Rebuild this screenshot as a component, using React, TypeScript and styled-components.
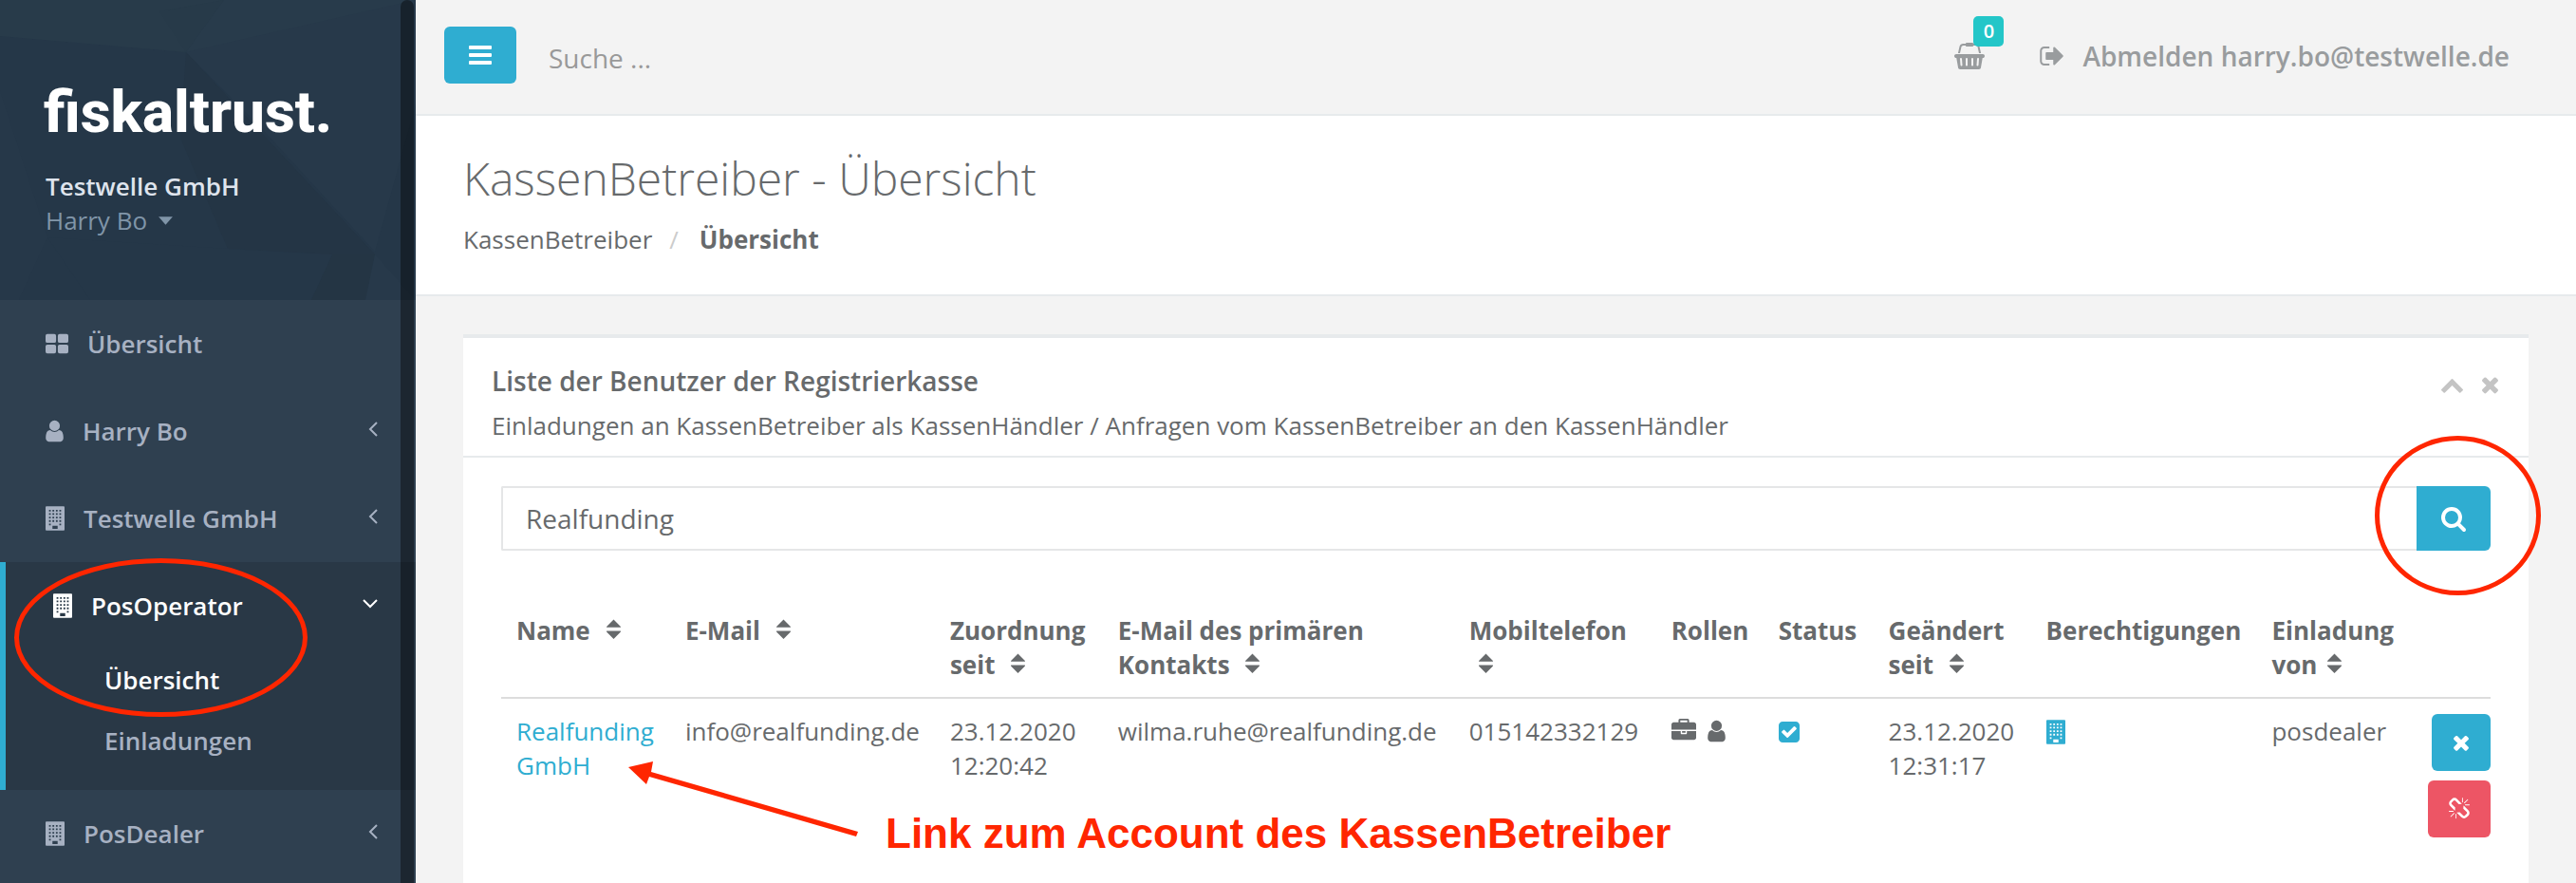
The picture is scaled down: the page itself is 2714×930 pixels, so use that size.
import React from 'react';
import styled, { createGlobalStyle, css } from 'styled-components';

const color = {
  text: '#676a6c',
  muted: '#999c9e',
  primary: '#2fadd1',
  danger: '#ed5565',
  info: '#23c6c8',
  line: '#e7eaec',
  canvas: '#f3f3f3',
  nav: '#2f4050',
  navActive: '#293846',
  navText: '#a7b1c2',
  mark: '#ff2600',
};

const GlobalStyle = createGlobalStyle`
  *, *::before, *::after { box-sizing: border-box; }
  body {
    margin: 0;
    background: ${color.canvas};
    color: ${color.text};
    font-family: "Open Sans", "Noto Sans", sans-serif;
    font-size: 26px;
    line-height: 36px;
    overflow: hidden;
  }
  button, input { font: inherit; color: inherit; }
  a { text-decoration: none; color: inherit; }
  h1, h2, p, ul, ol { margin: 0; padding: 0; }
  ul, ol { list-style: none; }
`;

/* ---------- icons (1792 units per em, baseline at 1536) ---------- */

type Glyph = { x: number; w: number; d: string };

const holes = [384, 640, 896, 1152].map((x) =>
  [256, 512, 768, 1024, 1280]
    .map((y) => (y === 1280 && x > 384 && x < 1152 ? '' : `M${x} ${y}h128v128h-128z`))
    .join('')
).join('');

const glyphs: Record<string, Glyph> = {
  bars: {
    x: 128,
    w: 1536,
    d: 'M192 256h1408q64 0 64 64v128q0 64-64 64h-1408q-64 0-64-64v-128q0-64 64-64zM192 768h1408q64 0 64 64v128q0 64-64 64h-1408q-64 0-64-64v-128q0-64 64-64zM192 1280h1408q64 0 64 64v128q0 64-64 64h-1408q-64 0-64-64v-128q0-64 64-64z',
  },
  times: {
    x: 302,
    w: 1188,
    d: 'M1490 1322q0 40-28 68l-136 136q-28 28-68 28t-68-28l-294-294-294 294q-28 28-68 28t-68-28l-136-136q-28-28-28-68t28-68l294-294-294-294q-28-28-28-68t28-68l136-136q28-28 68-28t68 28l294 294 294-294q28-28 68-28t68 28l136 136q28 28 28 68t-28 68l-294 294 294 294q28 28 28 68z',
  },
  search: {
    x: 64,
    w: 1664,
    d: 'M1216 832q0-185-131.5-316.5t-316.5-131.5-316.5 131.5-131.5 316.5 131.5 316.5 316.5 131.5 316.5-131.5 131.5-316.5zm512 832q0 52-38 90t-90 38q-54 0-90-38l-343-342q-179 124-399 124-143 0-273.5-55.5t-225-150-150-225-55.5-273.5 55.5-273.5 150-225 225-150 273.5-55.5 273.5 55.5 225 150 150 225 55.5 273.5q0 220-124 399l343 343q37 37 37 90z',
  },
  user: {
    x: 256,
    w: 1280,
    d: 'M1536 1399q0 109-62.5 187t-150.5 78h-854q-88 0-150.5-78t-62.5-187q0-85 8.5-160.5t31.5-152 58.5-131 94-89 134.5-34.5q131 128 313 128t313-128q76 0 134.5 34.5t94 89 58.5 131 31.5 152 8.5 160.5zm-256-887q0 159-112.5 271.5t-271.5 112.5-271.5-112.5-112.5-271.5 112.5-271.5 271.5-112.5 271.5 112.5 112.5 271.5z',
  },
  chevronUp: {
    x: 90,
    w: 1612,
    d: 'M1683 1331l-166 165q-19 19-45 19t-45-19l-531-531-531 531q-19 19-45 19t-45-19l-166-165q-19-19-19-45.5t19-45.5l742-741q19-19 45-19t45 19l742 741q19 19 19 45.5t-19 45.5z',
  },
  signOut: {
    x: 64,
    w: 1568,
    d: 'M704 1440q0 4 1 20t.5 26.5-3 23.5-10 19.5-20.5 6.5h-320q-119 0-203.5-84.5t-84.5-203.5v-704q0-119 84.5-203.5t203.5-84.5h320q13 0 22.5 9.5t9.5 22.5q0 4 1 20t.5 26.5-3 23.5-10 19.5-20.5 6.5h-320q-66 0-113 47t-47 113v704q0 66 47 113t113 47h312l11.5 1 11.5 3 8 5.5 7 9 2 13.5zm928-544q0 26-19 45l-544 544q-19 19-45 19t-45-19-19-45v-288h-448q-26 0-45-19t-19-45v-384q0-26 19-45t45-19h448v-288q0-26 19-45t45-19 45 19l544 544q19 19 19 45z',
  },
  basket: {
    x: 0,
    w: 2048,
    d: 'M1920 768q53 0 90.5 37.5t37.5 90.5-37.5 90.5-90.5 37.5h-15l-115 662q-8 46-44 76t-82 30h-1280q-46 0-82-30t-44-76l-115-662h-15q-53 0-90.5-37.5t-37.5-90.5 37.5-90.5 90.5-37.5h1792zm-1435 800q26-2 43.5-22.5t15.5-46.5l-32-416q-2-26-22.5-43.5t-46.5-15.5-43.5 22.5-15.5 46.5l32 416q2 25 20.5 42t43.5 17h5zm411-64v-416q0-26-19-45t-45-19-45 19-19 45v416q0 26 19 45t45 19 45-19 19-45zm384 0v-416q0-26-19-45t-45-19-45 19-19 45v416q0 26 19 45t45 19 45-19 19-45zm352 5l32-416q2-26-15.5-46.5t-43.5-22.5-46.5 15.5-22.5 43.5l-32 416q-2 26 15.5 46.5t43.5 22.5h5q25 0 43.5-17t20.5-42zm-1156-1217l-93 412h-132l101-441q19-88 89-143.5t160-55.5h167q0-26 19-45t45-19h384q26 0 45 19t19 45h167q90 0 160 55.5t89 143.5l101 441h-132l-93-412q-11-44-45.5-72t-79.5-28h-167q0 26-19 45t-45 19h-384q-26 0-45-19t-19-45h-167q-45 0-79.5 28t-45.5 72z',
  },
  check: {
    x: 128,
    w: 1536,
    d: 'M813 1299l614-614q19-19 19-45t-19-45l-102-102q-19-19-45-19t-45 19l-467 467-211-211q-19-19-45-19t-45 19l-102 102q-19 19-19 45t19 45l358 358q19 19 45 19t45-19zm851-883v960q0 119-84.5 203.5t-203.5 84.5h-960q-119 0-203.5-84.5t-84.5-203.5v-960q0-119 84.5-203.5t203.5-84.5h960q119 0 203.5 84.5t84.5 203.5z',
  },
  unlink: {
    x: 64,
    w: 1664,
    d: 'M503 1271l-256 256q-10 9-23 9-12 0-23-9-9-10-9-23t9-23l256-256q10-9 23-9t23 9q9 10 9 23t-9 23zm169 41v320q0 14-9 23t-23 9-23-9-9-23v-320q0-14 9-23t23-9 23 9 9 23zm-224-224q0 14-9 23t-23 9h-320q-14 0-23-9t-9-23 9-23 23-9h320q14 0 23 9t9 23zm1264 128q0 120-85 203l-147 146q-83 83-203 83-121 0-204-85l-334-335q-21-21-42-56l239-18 273 274q28 28 68 27.5t68-27.5l147-146q28-28 28-67 0-40-28-68l-274-275 18-239q35 21 56 42l336 336q84 86 84 204zm-617-724l-239 18-273-274q-28-28-68-28-39 0-68 27l-147 146q-28 28-28 67 0 40 28 68l274 274-18 240q-35-21-56-42l-336-336q-84-86-84-204 0-120 85-203l147-146q83-83 203-83 121 0 204 85l334 335q21 21 42 56zm633 84q0 14-9 23t-23 9h-320q-14 0-23-9t-9-23 9-23 23-9h320q14 0 23 9t9 23zm-544-544v320q0 14-9 23t-23 9-23-9-9-23v-320q0-14 9-23t23-9 23 9 9 23zm407 151l-256 256q-11 9-23 9t-23-9q-9-10-9-23t9-23l256-256q10-9 23-9t23 9q9 10 9 23t-9 23z',
  },
  briefcase: {
    x: 0,
    w: 1792,
    d: 'M640 256h512v-128h-512v128zm1152 640v480q0 66-47 113t-113 47h-1472q-66 0-113-47t-47-113v-480h672v160q0 26 19 45t45 19h320q26 0 45-19t19-45v-160h672zm-768 0v128h-256v-128h256zm768-480v384h-1792v-384q0-66 47-113t113-47h352v-160q0-40 28-68t68-28h576q40 0 68 28t28 68v160h352q66 0 113 47t47 113z',
  },
  building: {
    x: 128,
    w: 1408,
    d: `M192 0h1280q64 0 64 64v1664q0 64-64 64h-1280q-64 0-64-64v-1664q0-64 64-64z${holes}M640 1440h384v224h-384z`,
  },
  thLarge: {
    x: 64,
    w: 1664,
    d: 'M192 192h512q128 0 128 128v384q0 128-128 128h-512q-128 0-128-128v-384q0-128 128-128zM1088 192h512q128 0 128 128v384q0 128-128 128h-512q-128 0-128-128v-384q0-128 128-128zM192 960h512q128 0 128 128v384q0 128-128 128h-512q-128 0-128-128v-384q0-128 128-128zM1088 960h512q128 0 128 128v384q0 128-128 128h-512q-128 0-128-128v-384q0-128 128-128z',
  },
  sort: {
    x: 384,
    w: 1024,
    d: 'M384 608v-64L896 32l512 512v64zM384 864v64l512 512 512-512v-64z',
  },
  caret: { x: 384, w: 1024, d: 'M384 640h1024L896 1216z' },
};

const Svg = styled.svg`
  display: inline-block;
  flex: none;
  fill: currentColor;
  fill-rule: evenodd;
  vertical-align: -4px;
`;

const Icon = ({ name, size = 26, className }: { name: string; size?: number; className?: string }) => {
  const g = glyphs[name];
  return (
    <Svg
      className={className}
      viewBox={`${g.x} 0 ${g.w} 1792`}
      width={Math.round((g.w * size) / 1792)}
      height={size}
      aria-hidden="true"
    >
      <path d={g.d} />
    </Svg>
  );
};

/* ---------- shell ---------- */

const Shell = styled.div`
  display: flex;
  min-height: 100vh;
`;

const Sidebar = styled.nav`
  position: relative;
  flex: none;
  width: 438px;
  background: ${color.nav};
  color: ${color.navText};
  font-weight: 600;
`;

const ScrollThumb = styled.div`
  position: absolute;
  top: 0;
  right: 2px;
  bottom: 0;
  width: 14px;
  border-radius: 7px 7px 0 0;
  background: rgba(0, 0, 0, 0.4);
`;

const Profile = styled.div`
  position: relative;
  padding: 78px 46px 66px;
  background: #253748;
`;

const Facets = styled.svg`
  position: absolute;
  inset: 0;
  width: 100%;
  height: 100%;
`;

const ProfileText = styled.div`
  position: relative;
  display: flex;
  flex-direction: column;
  align-items: flex-start;
`;

const Logo = styled.a`
  color: #fff;
  font-family: Roboto, sans-serif;
  font-weight: 800;
  font-size: 62px;
  line-height: 80px;
  margin-bottom: 20px;
`;

const Company = styled.strong`
  padding-left: 2px;
  color: #dfe4ed;
  font-weight: 600;
`;

const AccountButton = styled.button`
  display: flex;
  align-items: center;
  gap: 12px;
  padding: 0 0 0 2px;
  border: 0;
  background: none;
  color: #8095a8;
  font-weight: 400;
`;

const NavGroup = styled.li<{ $active?: boolean }>`
  ${(p) =>
    p.$active &&
    css`
      position: relative;
      padding-bottom: 20px;
      border-left: 6px solid ${color.primary};
      background: ${color.navActive};
    `}
`;

const NavLink = styled.a<{ $active?: boolean }>`
  display: flex;
  align-items: center;
  gap: 20px;
  padding: 28px 40px 28px ${(p) => (p.$active ? 50 : 48)}px;
  color: ${(p) => (p.$active ? '#fff' : 'inherit')};
`;

const Angle = styled.svg`
  margin: 0 0 4px auto;
  fill: none;
  stroke: currentColor;
  stroke-width: 2;
`;

const SubLink = styled.a<{ $active?: boolean }>`
  display: block;
  padding: 14px 40px 14px 104px;
  color: ${(p) => (p.$active ? '#fff' : 'inherit')};
`;

const Main = styled.div`
  flex: 1;
  min-width: 0;
  display: flex;
  flex-direction: column;
`;

const TopBar = styled.header`
  display: flex;
  align-items: flex-start;
  padding: 28px 70px 26px 30px;
  border-bottom: 2px solid ${color.line};
`;

const Button = styled.button<{ $tone?: 'danger'; $width: number }>`
  display: flex;
  align-items: center;
  justify-content: center;
  flex: none;
  width: ${(p) => p.$width}px;
  height: 60px;
  padding: 0;
  border: 0;
  border-radius: 6px;
  background: ${(p) => (p.$tone === 'danger' ? color.danger : color.primary)};
  color: #fff;
`;

const GlobalSearch = styled.input`
  flex: 1;
  min-width: 0;
  height: 66px;
  margin-left: 34px;
  padding: 0;
  border: 0;
  background: none;
  font-size: 28px;
  &::placeholder {
    color: #999;
    opacity: 1;
  }
`;

const TopLinks = styled.div`
  display: flex;
  align-items: center;
  gap: 58px;
  height: 62px;
  color: ${color.muted};
  font-size: 28px;
  font-weight: 600;
`;

const BasketLink = styled.a`
  position: relative;
  display: flex;
`;

const Badge = styled.span`
  position: absolute;
  left: 20px;
  bottom: 24px;
  width: 32px;
  height: 32px;
  border-radius: 5px;
  background: ${color.info};
  color: #fff;
  font-size: 20px;
  line-height: 32px;
  text-align: center;
`;

const LogoutLink = styled.a`
  display: flex;
  align-items: center;
  gap: 20px;
`;

const PageHead = styled.section`
  padding: 40px 50px;
  border-bottom: 2px solid ${color.line};
  background: #fff;
`;

const Title = styled.h1`
  margin-bottom: 20px;
  font-size: 48px;
  line-height: 52px;
  font-weight: 300;
`;

const Crumbs = styled.ol`
  display: flex;
  li + li::before {
    content: '/';
    padding: 0 22px 0 18px;
    color: #ccc;
    font-weight: 400;
  }
  li:last-child {
    font-weight: 700;
  }
`;

const Content = styled.main`
  display: flex;
  flex: 1;
  padding: 40px 50px 0;
`;

const Panel = styled.section`
  flex: 1;
  min-width: 0;
  border-top: 4px solid ${color.line};
  background: #fff;
`;

const PanelHead = styled.div`
  display: flex;
  justify-content: space-between;
  padding: 26px 32px 14px 30px;
  border-bottom: 2px solid ${color.line};
`;

const PanelTitle = styled.h2`
  margin-bottom: 10px;
  font-size: 28px;
  line-height: 38px;
  font-weight: 600;
`;

const PanelTools = styled.div`
  display: flex;
  align-items: flex-start;
  gap: 20px;
  padding-top: 10px;
  color: #c4c4c4;
`;

const ToolButton = styled.button`
  display: flex;
  padding: 0;
  border: 0;
  background: none;
`;

const PanelBody = styled.div`
  padding: 30px 40px;
`;

const SearchRow = styled.form`
  position: relative;
  display: flex;
  margin-bottom: 50px;
`;

const SearchField = styled.input`
  flex: 1;
  min-width: 0;
  height: 68px;
  padding: 0 24px;
  border: 2px solid #e5e6e7;
  border-right: 0;
  border-radius: 2px 0 0 2px;
  background: #fff;
  font-size: 28px;
  outline: 0;
`;

const SearchButton = styled(Button)`
  height: 68px;
  border-radius: 0 6px 6px 0;
`;

const Table = styled.table`
  width: 100%;
  table-layout: fixed;
  border-collapse: collapse;
`;

const Col = styled.col<{ $share?: number }>`
  width: ${(p) => (p.$share ? `${p.$share}%` : 'auto')};
`;

const Th = styled.th`
  padding: 16px 0 16px 16px;
  border-bottom: 2px solid #ddd;
  font-weight: 700;
  text-align: left;
  vertical-align: top;
`;

const Td = styled.td`
  position: relative;
  padding: 16px 0 16px 16px;
  vertical-align: top;
`;

const SortIcon = styled(Icon)<{ $tight?: boolean }>`
  margin-left: ${(p) => (p.$tight ? 4 : 10)}px;
`;

const Roles = styled.span`
  display: inline-flex;
  align-items: center;
  gap: 12px;
  height: 36px;
`;

const StateIcon = styled.span`
  color: ${color.primary};
`;

const CompanyLink = styled.a`
  color: ${color.primary};
`;

const Actions = styled.div`
  display: flex;
  flex-direction: column;
  align-items: flex-end;
  gap: 10px;
`;

/* ---------- hand-drawn marks over the page ---------- */

const Ring = styled.span<{ $left?: number; $right?: number; $top: number; $w: number; $h: number }>`
  position: absolute;
  z-index: 2;
  ${(p) => (p.$left !== undefined ? `left: ${p.$left}px;` : '')}
  ${(p) => (p.$right !== undefined ? `right: ${p.$right}px;` : '')}
  top: ${(p) => p.$top}px;
  width: ${(p) => p.$w}px;
  height: ${(p) => p.$h}px;
  border: 5px solid ${color.mark};
  border-radius: 50%;
  pointer-events: none;
`;

const Callout = styled.div`
  position: absolute;
  z-index: 2;
  top: 64px;
  left: 132px;
  display: flex;
  gap: 28px;
  color: ${color.mark};
  font-family: "Liberation Sans", Arial, sans-serif;
  font-size: 44px;
  line-height: 50px;
  font-weight: 700;
  white-space: nowrap;
  pointer-events: none;
`;

const Arrow = styled.svg`
  flex: none;
  fill: currentColor;
`;

const CalloutText = styled.span`
  padding-top: 53px;
`;

/* ---------- data ---------- */

const columns: { label: string; share?: number; sort?: 'wide' | 'tight' }[] = [
  { label: 'Name', share: 8.49, sort: 'wide' },
  { label: 'E-Mail', share: 13.31, sort: 'wide' },
  { label: 'Zuordnung seit', share: 8.44, sort: 'wide' },
  { label: 'E-Mail des primären Kontakts', share: 17.65, sort: 'wide' },
  { label: 'Mobiltelefon', share: 10.16, sort: 'wide' },
  { label: 'Rollen', share: 5.39 },
  { label: 'Status', share: 5.53 },
  { label: 'Geändert seit', share: 7.92, sort: 'wide' },
  { label: 'Berechtigungen', share: 11.35 },
  { label: 'Einladung von', share: 7.1, sort: 'tight' },
  { label: '' },
];

const AngleLeft = () => (
  <Angle width="10" height="18" viewBox="0 0 10 18" aria-hidden="true">
    <path d="M9 2L2 9l7 7" />
  </Angle>
);

const AngleDown = () => (
  <Angle width="16" height="10" viewBox="0 0 16 10" aria-hidden="true">
    <path d="M1 1l7 7 7-7" />
  </Angle>
);

const App = () => (
  <>
    <GlobalStyle />
    <Shell>
      <Sidebar>
        <Profile>
          <Facets viewBox="0 0 438 316" preserveAspectRatio="none" aria-hidden="true">
            <path d="M0 0H438V110L395 265L280 140L196 55L0 38z" fill="#27394a" />
            <path d="M0 0H236L196 55L0 38z" fill="#283b4a" />
            <path d="M168 12L236 0L196 55z" fill="#273a49" />
            <path d="M196 55L438 0H236z" fill="#283b4b" />
            <path d="M196 55L395 268L340 268L240 262L190 145z" fill="#243545" />
            <path d="M350 268L395 268L385 316H328z" fill="#243544" />
            <path d="M0 95L50 250L20 316H0z" fill="#263849" />
            <path d="M50 250L240 262L350 268L328 316H95z" fill="#253748" />
            <path d="M395 268L438 316H385z" fill="#27394a" />
          </Facets>
          <ProfileText>
            <Logo href="#">fiskaltrust.</Logo>
            <Company>Testwelle GmbH</Company>
            <AccountButton type="button">
              Harry Bo <Icon name="caret" />
            </AccountButton>
          </ProfileText>
        </Profile>
        <ul>
          <NavGroup>
            <NavLink href="#"><Icon name="thLarge" />Übersicht</NavLink>
          </NavGroup>
          <NavGroup>
            <NavLink href="#"><Icon name="user" />Harry Bo<AngleLeft /></NavLink>
          </NavGroup>
          <NavGroup>
            <NavLink href="#"><Icon name="building" />Testwelle GmbH<AngleLeft /></NavLink>
          </NavGroup>
          <NavGroup $active>
            <NavLink href="#" $active><Icon name="building" />PosOperator<AngleDown /></NavLink>
            <ul>
              <li><SubLink href="#" $active>Übersicht</SubLink></li>
              <li><SubLink href="#">Einladungen</SubLink></li>
            </ul>
            <Ring $left={9} $top={-4} $w={309} $h={167} />
          </NavGroup>
          <NavGroup>
            <NavLink href="#"><Icon name="building" />PosDealer<AngleLeft /></NavLink>
          </NavGroup>
        </ul>
        <ScrollThumb />
      </Sidebar>

      <Main>
        <TopBar>
          <Button type="button" $width={76} aria-label="Menü"><Icon name="bars" size={28} /></Button>
          <GlobalSearch type="text" placeholder="Suche ..." aria-label="Suche" />
          <TopLinks>
            <BasketLink href="#" aria-label="Warenkorb">
              <Icon name="basket" size={28} />
              <Badge>0</Badge>
            </BasketLink>
            <LogoutLink href="#">
              <Icon name="signOut" size={28} />
              Abmelden harry.bo@testwelle.de
            </LogoutLink>
          </TopLinks>
        </TopBar>

        <PageHead>
          <Title>KassenBetreiber - Übersicht</Title>
          <Crumbs>
            <li><a href="#">KassenBetreiber</a></li>
            <li>Übersicht</li>
          </Crumbs>
        </PageHead>

        <Content>
          <Panel>
            <PanelHead>
              <div>
                <PanelTitle>Liste der Benutzer der Registrierkasse</PanelTitle>
                <p>Einladungen an KassenBetreiber als KassenHändler / Anfragen vom KassenBetreiber an den KassenHändler</p>
              </div>
              <PanelTools>
                <ToolButton type="button" aria-label="Einklappen"><Icon name="chevronUp" /></ToolButton>
                <ToolButton type="button" aria-label="Schließen"><Icon name="times" /></ToolButton>
              </PanelTools>
            </PanelHead>
            <PanelBody>
              <SearchRow onSubmit={(e: React.FormEvent) => e.preventDefault()}>
                <SearchField type="text" defaultValue="Realfunding" aria-label="Benutzer suchen" />
                <SearchButton type="submit" $width={78} aria-label="Suchen"><Icon name="search" size={28} /></SearchButton>
                <Ring $right={-53} $top={-53} $w={175} $h={168} />
              </SearchRow>
              <Table>
                <colgroup>
                  {columns.map((c) => <Col key={c.label} $share={c.share} />)}
                </colgroup>
                <thead>
                  <tr>
                    {columns.map((c) => (
                      <Th key={c.label} scope="col">
                        {c.label}
                        {c.sort && <> <SortIcon name="sort" $tight={c.sort === 'tight'} /></>}
                      </Th>
                    ))}
                  </tr>
                </thead>
                <tbody>
                  <tr>
                    <Td>
                      <CompanyLink href="#">Realfunding GmbH</CompanyLink>
                      <Callout>
                        <Arrow width="245" height="86" viewBox="0 0 245 86" aria-hidden="true">
                          <path d="M2 8L28 2L26 13L244 76L242 81L24 18L21 26z" />
                        </Arrow>
                        <CalloutText>Link zum Account des KassenBetreiber</CalloutText>
                      </Callout>
                    </Td>
                    <Td>info@realfunding.de</Td>
                    <Td>23.12.2020 12:20:42</Td>
                    <Td>wilma.ruhe@realfunding.de</Td>
                    <Td>015142332129</Td>
                    <Td><Roles><Icon name="briefcase" /><Icon name="user" /></Roles></Td>
                    <Td><StateIcon><Icon name="check" /></StateIcon></Td>
                    <Td>23.12.2020 12:31:17</Td>
                    <Td><StateIcon><Icon name="building" /></StateIcon></Td>
                    <Td>posdealer</Td>
                    <Td>
                      <Actions>
                        <Button type="button" $width={62} aria-label="Entfernen"><Icon name="times" size={24} /></Button>
                        <Button type="button" $tone="danger" $width={66} aria-label="Verknüpfung lösen"><Icon name="unlink" size={24} /></Button>
                      </Actions>
                    </Td>
                  </tr>
                </tbody>
              </Table>
            </PanelBody>
          </Panel>
        </Content>
      </Main>
    </Shell>
  </>
);

export default App;
